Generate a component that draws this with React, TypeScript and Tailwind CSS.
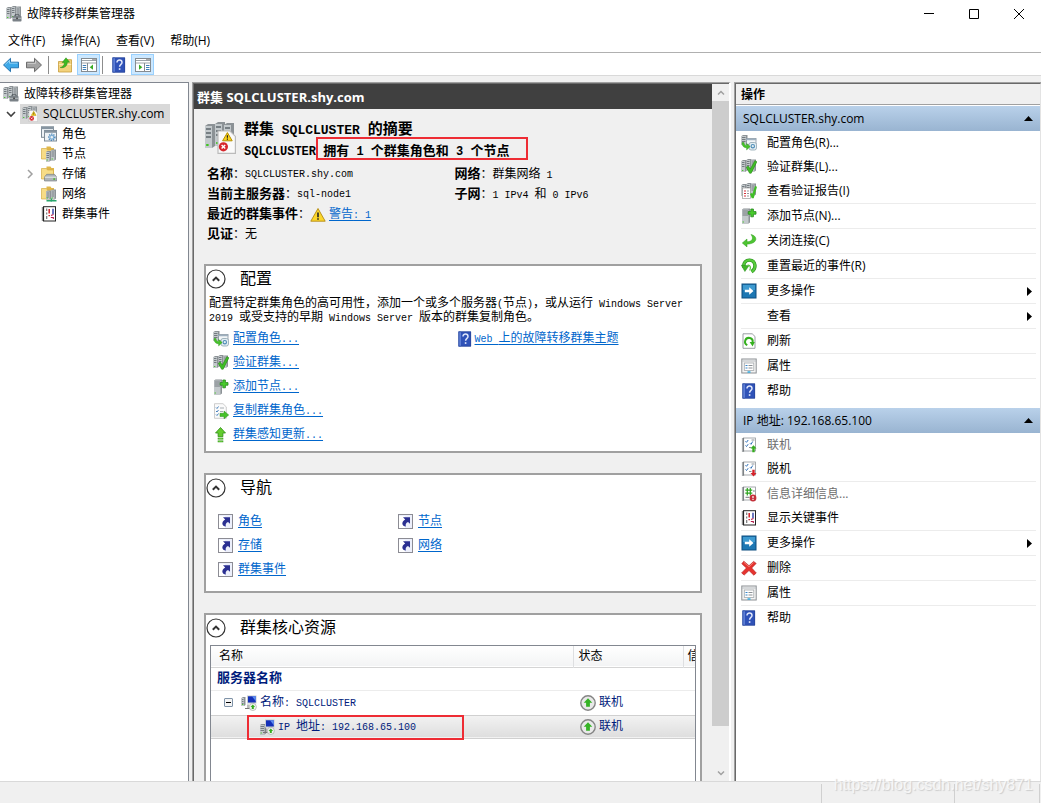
import React from 'react';

interface IconProps {
  className?: string;
}

interface ActionItem {
  label: string;
  icon?: React.ReactNode;
  divider?: boolean;
  disabled?: boolean;
  submenu?: boolean;
}

/* ---------- Icon parts ---------- */

const Svg: React.FC<{ className?: string; box?: string; children: React.ReactNode }> = ({
  className = 'w-4 h-4',
  box = '0 0 16 16',
  children,
}) => (
  <svg viewBox={box} className={`${className} shrink-0`} fill="none" aria-hidden="true">
    {children}
  </svg>
);

const Rack: React.FC<{ x: number; y: number; w?: number; h?: number }> = ({ x, y, w = 5, h = 11 }) => (
  <g>
    <path d={`M${x} ${y + 1}l1.5 -1h${w - 1.5}v${h - 1}l-1.5 1h${1.5 - w}z`} fill="#8c9296" />
    <rect x={x} y={y + 1} width={w - 1.5} height={h - 1} fill="#c3c9cc" />
    <path
      d={`M${x + 0.5} ${y + 2.5}h${w - 2.5}M${x + 0.5} ${y + 4.5}h${w - 2.5}M${x + 0.5} ${y + 6.5}h${w - 2.5}`}
      stroke="#5f676c"
      strokeWidth="0.8"
    />
    <rect x={x + 0.6} y={y + h - 2} width="1.2" height="1" fill="#3fc51f" />
  </g>
);

const Racks = () => (
  <g>
    <Rack x={5.5} y={0} h={12} />
    <Rack x={10} y={0.5} h={12} />
    <Rack x={0.5} y={1} h={12} />
  </g>
);

const ManagerIcon = () => (
  <Svg>
    <Racks />
    <rect x="6.5" y="10" width="9" height="5.5" rx="0.8" fill="#7a8187" />
    <path d="M9 10V8.8h4V10" stroke="#4b5257" />
    <path d="M6.5 12.3h9" stroke="#c9ced1" strokeWidth="0.8" />
    <rect x="10.3" y="11.6" width="1.5" height="1.5" fill="#333" />
  </Svg>
);

const ClusterIcon: React.FC<IconProps> = ({ className }) => (
  <Svg className={className}>
    <Racks />
    <path d="M7 4.5h6l2.7 2.7v8.5H7z" fill="#fafafa" stroke="#bbb" strokeWidth="0.6" />
    <path d="M11.7 5.3l2.4 4.1H9.3z" fill="#f9d21c" stroke="#b58f00" strokeWidth="0.5" />
    <path d="M11.7 6.6v1.3M11.7 8.3v0.6" stroke="#222" strokeWidth="0.6" />
    <circle cx="9.7" cy="12.4" r="2.3" fill="#d6262c" />
    <path d="M8.8 11.5l1.8 1.8M10.6 11.5l-1.8 1.8" stroke="#fff" strokeWidth="0.7" />
  </Svg>
);

const RolesIcon = () => (
  <Svg>
    <rect x="0.5" y="0.8" width="12" height="10.5" fill="#eef2f5" stroke="#7f8c97" />
    <path d="M0 2h13" stroke="#8795a1" strokeWidth="2.2" />
    <rect x="3.5" y="4.5" width="12" height="10.5" fill="#eef2f5" stroke="#7f8c97" />
    <path d="M3 5.7h13" stroke="#8795a1" strokeWidth="2.2" />
    <circle cx="10.8" cy="11.2" r="3" stroke="#4b86b8" strokeWidth="1.6" strokeDasharray="1.2 1" />
    <circle cx="10.8" cy="11.2" r="1.9" stroke="#7fb0d6" strokeWidth="1.2" />
  </Svg>
);

const FolderShape = () => (
  <g>
    <path d="M5.5 0.5h4l1 1.5H13V12H5.5z" fill="#e0b64a" />
    <path d="M0.5 2.5h5l1 1.5h6V13H0.5z" fill="#f7dc86" stroke="#d4ac45" strokeWidth="0.7" />
  </g>
);

const NodesIcon = () => (
  <Svg>
    <FolderShape />
    <Rack x={5} y={5} w={5} h={10.5} />
    <Rack x={10} y={3.5} w={5} h={11} />
  </Svg>
);

const StorageIcon = () => (
  <Svg>
    <FolderShape />
    <path d="M3.5 11l2.2-2.7h7.8l2.2 2.7v4H3.5z" fill="#aeb4b8" stroke="#6c7378" strokeWidth="0.6" />
    <path d="M3.8 11.2h11.7" stroke="#e9ecee" />
    <rect x="12.3" y="12.4" width="1.8" height="1.3" fill="#35b51a" />
  </Svg>
);

const NetworkIcon = () => (
  <Svg>
    <FolderShape />
    <Rack x={5} y={4.5} w={5} h={9} />
    <Rack x={10} y={3.5} w={5} h={10} />
    <path d="M5.5 14.7h10M10.3 12.5v3.2" stroke="#27a56c" strokeWidth="1.4" />
  </Svg>
);

const EventsIcon = () => (
  <Svg>
    <rect x="2.5" y="0.7" width="12" height="14.3" fill="#fff" stroke="#222" />
    <path d="M2 1.5v13.5" stroke="#222" strokeWidth="2.4" strokeDasharray="1 1" />
    <path d="M5.7 2.5v2.5M5.7 6.5v2M5.7 10v3" stroke="#777" strokeWidth="1.2" />
    <path d="M8.2 3v4.5M8.2 9v1.3" stroke="#cf1f26" strokeWidth="1.5" />
    <path d="M12 2.8v5.5" stroke="#1c2f9e" strokeWidth="1.3" />
    <path d="M10 9.5l2.5-1M9.8 11.5h2.5v1.5" stroke="#b31b4b" strokeWidth="1.1" />
  </Svg>
);

const HelpIcon = () => (
  <Svg>
    <rect x="1.5" y="0.5" width="12.5" height="15" fill="#2f52b8" />
    <rect x="1.5" y="0.5" width="2.5" height="15" fill="#5c7ed6" />
    <path d="M1.8 0.8h11.9v14.4H1.8z" stroke="#27418f" strokeWidth="0.6" />
    <path d="M6 5.4c0-3.2 5-3.1 5 0 0 2-2.4 2-2.4 4.4" stroke="#dfe6fa" strokeWidth="1.5" />
    <rect x="7.8" y="11.2" width="1.6" height="1.7" fill="#dfe6fa" />
  </Svg>
);

const BackArrow = () => (
  <Svg>
    <path d="M0.5 8L7.5 1.3v3.9h8v5.6h-8v3.9z" fill="#3ea9e8" stroke="#1c6ba8" strokeWidth="0.9" strokeLinejoin="round" />
    <path d="M2.3 7.4L6.5 3.5v2.7h8" stroke="#a5dcf9" strokeWidth="0.8" />
  </Svg>
);

const ForwardArrow = () => (
  <Svg>
    <path d="M15.5 8L8.5 1.3v3.9h-8v5.6h8v3.9z" fill="#a3a3a3" stroke="#606060" strokeWidth="0.9" strokeLinejoin="round" />
    <path d="M1.5 6.4h8V3.6" stroke="#d4d4d4" strokeWidth="0.8" />
  </Svg>
);

const UpFolderIcon = () => (
  <Svg>
    <path d="M1.5 4.5H8l1.5-1.8h5V15h-13z" fill="#f3d27c" stroke="#c79c3a" strokeWidth="0.8" />
    <path d="M1.9 7.5h12.3" stroke="#fbe9b5" />
    <path d="M3.2 10.5c2.5-0.5 4.2-2.2 4.2-5H5.2L9 0.8l3.6 4.4h-2.3c0 3.8-3 6.2-7.1 5.3z" fill="#3dbb22" stroke="#27861a" strokeWidth="0.5" />
  </Svg>
);

const PaneIcon: React.FC<{ mirrored?: boolean }> = ({ mirrored }) => (
  <Svg>
    <rect x="0.5" y="1.5" width="15" height="13" fill="#fff" stroke="#858c92" />
    <path d="M1 3.5h14M1 6h14" stroke="#9da4aa" />
    <path d="M11.5 2.6h1M13.5 2.6h1" stroke="#444" />
    {mirrored ? (
      <g>
        <path d="M9.5 6v8.5" stroke="#858c92" />
        <path d="M11 8.5h3.5M11 10.5h3.5M11 12.5h3.5" stroke="#3d7fb8" />
        <path d="M4 7.6v5.2L7.3 10.2z" fill="#39ad25" />
      </g>
    ) : (
      <g>
        <path d="M6.5 6v8.5" stroke="#858c92" />
        <path d="M1.7 8.5h3.5M1.7 10.5h3.5M1.7 12.5h3.5" stroke="#3d7fb8" />
        <path d="M12 7.6v5.2L8.7 10.2z" fill="#39ad25" />
      </g>
    )}
  </Svg>
);

const ConfigRoleIcon = () => (
  <Svg>
    <Rack x={0.5} y={0} w={6} h={10} />
    <rect x="5.5" y="3.5" width="9.5" height="6" fill="#f3f6f8" stroke="#8795a1" strokeWidth="0.8" />
    <path d="M5.2 4.5h10" stroke="#9fb0bf" strokeWidth="1.5" />
    <rect x="8" y="7.5" width="7.5" height="7.5" rx="2" fill="#e2edf2" stroke="#8ea4b0" strokeWidth="0.8" />
    <circle cx="11.8" cy="11.2" r="1.7" stroke="#4f8db8" strokeWidth="1.1" />
    <path d="M1 7.5c0 3.8 2 5.2 4.6 5.2v2.2L9.2 11.6 5.6 8.4v2C3.8 10.4 3.2 9.4 3 7.5z" fill="#46c22a" stroke="#2b8f18" strokeWidth="0.4" />
  </Svg>
);

const ValidateIcon = () => (
  <Svg>
    <Racks />
    <path d="M5.3 8.3l2-1.2 2 3 4.6-8.4 2 1-5.7 11.5H8.6z" fill="#3fbe26" stroke="#2a8a18" strokeWidth="0.6" />
  </Svg>
);

const ReportIcon = () => (
  <Svg>
    <Racks />
    <rect x="1.5" y="5" width="8" height="10.5" fill="#fff" stroke="#9a9a9a" strokeWidth="0.7" />
    <path d="M3 8h2M3 10.5h2M3 13h2" stroke="#d4303a" strokeWidth="1.2" />
    <path d="M6 8h2M6 10.5h2M6 13h2" stroke="#8a8f94" strokeWidth="0.9" />
    <path d="M9 11l1.5-1 0.8 1.2L14 3l2 0.7-3.3 11.5h-2z" fill="#3fbe26" />
  </Svg>
);

const AddNodeIcon = () => (
  <Svg>
    <Rack x={1} y={0.5} w={8} h={15} />
    <path d="M9.8 1h2.6v2.6H15v2.6h-2.6v2.6H9.8V6.2H7.2V3.6h2.6z" fill="#49cb2c" stroke="#22851a" strokeWidth="0.8" />
  </Svg>
);

const CopyRoleIcon = () => (
  <Svg>
    <path d="M1.5 0.7h8.5l3.3 3.2v11.4H1.5z" fill="#fbfbfb" stroke="#c0c0c0" strokeWidth="0.8" />
    <path d="M3 4.5l1 1 1.5-2M3 8l1 1 1.5-2M3 11.5l1 1 1.5-2" stroke="#3273b3" strokeWidth="0.9" />
    <path d="M7 5h4M7 8.5h3" stroke="#a6adb2" />
    <path d="M7 10.3h4V8l4.7 4-4.7 3.8v-2.3H7z" fill="#46c22a" stroke="#2b8f18" strokeWidth="0.5" />
  </Svg>
);

const UpdateIcon = () => (
  <Svg>
    <path d="M7.5 0.5l5 5.5H9.9v3.7H5.1V6H2.5z" fill="#62cc2d" stroke="#2f8d18" strokeWidth="0.8" />
    <path d="M4.7 11.6h5.6M4.7 14.4h5.6" stroke="#3a9d1e" strokeWidth="1.8" />
    <path d="M5.5 11.6h4M5.5 14.4h4" stroke="#7bdc48" strokeWidth="0.7" />
  </Svg>
);

const CloseConnIcon = () => (
  <Svg>
    <path d="M10 1.5c7 1.4 7 9.4-4 9.6v2.8L1.3 10 6 6v2.8c5.2 0 7-3.6 4-7.3z" fill="#4dc431" stroke="#2f9c1c" strokeWidth="0.5" />
  </Svg>
);

const ResetIcon = () => (
  <Svg>
    <path d="M3 9.5C2 4.5 5.2 2 8.6 2.1c6.4 0.3 7 8.6 2 11.7" stroke="#278b1c" strokeWidth="3.4" />
    <path d="M3 9.5C2 4.5 5.2 2 8.6 2.1c6.4 0.3 7 8.6 2 11.7" stroke="#58cb3c" strokeWidth="2.2" />
    <path d="M0.3 7.2l7.6 0.5-4 5.8z" fill="#41b628" stroke="#278b1c" strokeWidth="0.5" />
    <path d="M6.5 7.3c2.5-0.6 4 2.2 2.2 5.2" stroke="#58cb3c" strokeWidth="1.3" />
  </Svg>
);

const MoreIcon = () => (
  <Svg>
    <rect x="1" y="1" width="14" height="14" fill="#1d77b3" stroke="#0f4f80" />
    <path d="M2 2h12v5H2z" fill="#3d9ad0" />
    <path d="M3.8 6.8h4.4V4.2L12.5 8l-4.3 3.8V9.2H3.8z" fill="#fff" />
  </Svg>
);

const RefreshIcon = () => (
  <Svg>
    <path d="M2 0.8h9.2L14 3.5v11.8H2z" fill="#fff" stroke="#8e9499" strokeWidth="0.9" />
    <path d="M6.3 12.2A3.8 3.8 0 1 1 11.6 9.5" stroke="#35b01f" strokeWidth="2" />
    <path d="M8.6 9h5.2l-2.2 4.4z" fill="#35b01f" />
  </Svg>
);

const PropsIcon = () => (
  <Svg>
    <rect x="0.8" y="1" width="14.4" height="14" fill="#f4f4f4" stroke="#8b8f93" />
    <path d="M1 3h14" stroke="#b7bcc0" />
    <rect x="3.3" y="5" width="9.5" height="7.5" fill="#fff" stroke="#a3a8ac" strokeWidth="0.8" />
    <path d="M4.5 7.5h2M4.5 10h2" stroke="#3584c9" />
    <path d="M7.5 7.5h4M7.5 10h4" stroke="#8b9094" />
    <path d="M6.5 14h3" stroke="#29a8e0" strokeWidth="1.4" />
  </Svg>
);

const TaskDoc: React.FC<{ children: React.ReactNode }> = ({ children }) => (
  <Svg>
    <rect x="2.5" y="1" width="12" height="13" fill="#fff" stroke="#8f959a" strokeWidth="0.8" />
    <path d="M2 1.5v13" stroke="#565c61" strokeWidth="2.2" strokeDasharray="1 1" />
    {children}
  </Svg>
);

const OnlineIcon = () => (
  <TaskDoc>
    <path d="M4.5 4.3l1 1L7.2 3M4.5 8.5l1 1 1.7-2.3M9 6.3l1 1 1.7-2.8" stroke="#2e6fb8" />
    <path d="M8 10.5h2.5M10.5 3h3" stroke="#8b9196" />
    <path d="M12.5 8.3l3 3.3h-1.8v3.6h-2.4v-3.6H9.5z" fill="#35ad1f" />
  </TaskDoc>
);

const OfflineIcon = () => (
  <TaskDoc>
    <path d="M4.5 4.3l1 1L7.2 3M4.5 8.5l1 1 1.7-2.3M9 6.3l1 1 1.7-2.8" stroke="#2e6fb8" />
    <path d="M8 10.5h2.5M10.5 3h3" stroke="#8b9196" />
    <path d="M12.5 15.4l3-3.3h-1.8V8.7h-2.4v3.4H9.5z" fill="#d4222a" />
  </TaskDoc>
);

const InfoIcon = () => (
  <TaskDoc>
    <path d="M6.3 2v7.5M9.3 2v7.5M4.3 4.2h7M4.3 7.2h7" stroke="#2da31e" strokeWidth="1.2" />
    <path d="M4.5 11.3h4M12 5h1.8" stroke="#70767b" />
    <circle cx="12" cy="12" r="3.4" fill="#c5303a" />
    <path d="M12 10v2.3M12 13v1" stroke="#fff" strokeWidth="1.2" />
  </TaskDoc>
);

const DeleteIcon = () => (
  <Svg>
    <path
      d="M2.8 1.2L8 5.7l4.6-4.3 2.6 2L10.7 8l4.6 5-2.5 2.2L8 10.5l-4.8 4.6-2.6-2.2L5.4 8 0.8 3.7z"
      fill="#e6332f"
      stroke="#b01c1c"
      strokeWidth="0.6"
    />
    <path d="M2.8 2.2L8 6.8l4.5-4.2" stroke="#f78b80" strokeWidth="0.8" />
  </Svg>
);

const ShortcutIcon = () => (
  <Svg>
    <rect x="0.5" y="0.5" width="14" height="14" fill="#eceffb" stroke="#8c8c94" />
    <path d="M1 2h6v12H1z" fill="#fff" />
    <path d="M5 3.2h7v6.6L10 7.9c-2.2 1-2.9 2.6-2 4.6C3.6 12.3 3 8 7.2 5.5z" fill="#2a2f91" />
  </Svg>
);

const WarningIcon = () => (
  <Svg>
    <path d="M8 1.5l7.2 12.7H0.8z" fill="#fbd62a" stroke="#b38a13" strokeWidth="0.9" strokeLinejoin="round" />
    <path d="M8 5.5v4.7M8 11.3v1.5" stroke="#222" strokeWidth="1.6" />
  </Svg>
);

const ComputerIcon: React.FC<{ tall?: boolean }> = ({ tall }) => (
  <Svg>
    {tall ? <Rack x={1} y={5} w={6} h={10.5} /> : <Rack x={0.5} y={2} w={4} h={9} />}
    <rect x="6" y="0.5" width="9.5" height="8" fill="#c8ccd0" />
    <rect x="7" y="1.3" width="7.8" height="6.2" fill="#1430b8" />
    <path d="M11 1.3h3.8v5z" fill="#5e8ef0" />
    <path d="M4 13.5h5M7 9.5v4" stroke="#777" />
    <circle cx="11.8" cy="11.9" r="3.6" fill="#f0f2f0" stroke="#a5aaa5" strokeWidth="0.7" />
    <path d="M11.8 9.4l2.3 2.5h-1.3v2.2h-2v-2.2H9.5z" fill="#35ad1f" />
  </Svg>
);

const StatusUpIcon = () => (
  <Svg>
    <circle cx="8" cy="8" r="7.2" fill="#e9e9e9" stroke="#858585" strokeWidth="1.4" />
    <path d="M8 3.3l4.3 4.5H9.9v3.9H6.1V7.8H3.7z" fill="#35b325" />
  </Svg>
);

const CollapseIcon = () => (
  <Svg className="w-[20px] h-[20px]" box="0 0 20 20">
    <circle cx="10" cy="10" r="9" fill="#fff" stroke="#333" strokeWidth="1.2" />
    <path d="M6.8 11.8L10 8.6l3.2 3.2" stroke="#333" strokeWidth="2" />
  </Svg>
);

/* ---------- Text ---------- */

// Latin runs are half the width of a CJK glyph, so they get their own size
const Mixed: React.FC<{ text: string; latin?: string }> = ({ text, latin = 'text-[10px]' }) => (
  <>
    {text.split(/([\x20-\x7e]+)/).map((part, i) =>
      i % 2 ? (
        <span key={i} className={`${latin} leading-none`}>
          {part}
        </span>
      ) : (
        part
      )
    )}
  </>
);

const TextLink: React.FC<{ text: string; icon: React.ReactNode; gap?: string }> = ({ text, icon, gap = 'gap-1' }) => (
  <a href="#" className={`flex items-center h-6 ${gap} text-[#0066cc]`}>
    {icon}
    <span className="underline underline-offset-2 whitespace-nowrap">
      <Mixed text={text} />
    </span>
  </a>
);

/* ---------- Data ---------- */

const MENUS = ['文件(F)', '操作(A)', '查看(V)', '帮助(H)'];

const TREE_CHILDREN = [
  { label: '角色', icon: <RolesIcon /> },
  { label: '节点', icon: <NodesIcon /> },
  { label: '存储', icon: <StorageIcon />, expandable: true },
  { label: '网络', icon: <NetworkIcon /> },
  { label: '群集事件', icon: <EventsIcon /> },
];

const CONFIG_LINKS = [
  { label: '配置角色...', icon: <ConfigRoleIcon /> },
  { label: '验证群集...', icon: <ValidateIcon /> },
  { label: '添加节点...', icon: <AddNodeIcon /> },
  { label: '复制群集角色...', icon: <CopyRoleIcon /> },
  { label: '群集感知更新...', icon: <UpdateIcon /> },
];

const NAV_LINKS = ['角色', '节点', '存储', '网络', '群集事件'];

const CLUSTER_ACTIONS: ActionItem[] = [
  { label: '配置角色(R)...', icon: <ConfigRoleIcon /> },
  { label: '验证群集(L)...', icon: <ValidateIcon /> },
  { label: '查看验证报告(I)', icon: <ReportIcon />, divider: true },
  { label: '添加节点(N)...', icon: <AddNodeIcon />, divider: true },
  { label: '关闭连接(C)', icon: <CloseConnIcon />, divider: true },
  { label: '重置最近的事件(R)', icon: <ResetIcon />, divider: true },
  { label: '更多操作', icon: <MoreIcon />, divider: true, submenu: true },
  { label: '查看', divider: true, submenu: true },
  { label: '刷新', icon: <RefreshIcon />, divider: true },
  { label: '属性', icon: <PropsIcon />, divider: true },
  { label: '帮助', icon: <HelpIcon /> },
];

const ADDRESS_ACTIONS: ActionItem[] = [
  { label: '联机', icon: <OnlineIcon />, disabled: true },
  { label: '脱机', icon: <OfflineIcon />, divider: true },
  { label: '信息详细信息...', icon: <InfoIcon />, disabled: true },
  { label: '显示关键事件', icon: <EventsIcon />, divider: true },
  { label: '更多操作', icon: <MoreIcon />, divider: true, submenu: true },
  { label: '删除', icon: <DeleteIcon />, divider: true },
  { label: '属性', icon: <PropsIcon />, divider: true },
  { label: '帮助', icon: <HelpIcon /> },
];

/* ---------- Sections ---------- */

const TitleBar = () => (
  <header className="flex items-center h-7 pl-[6px] bg-white">
    <ManagerIcon />
    <h1 className="ml-[5px] flex-1">故障转移群集管理器</h1>
    <button aria-label="最小化" className="w-[45px] h-7 flex items-center justify-center">
      <Svg className="w-[10px] h-[10px]" box="0 0 10 10"><path d="M0 4.5h10" stroke="#000" /></Svg>
    </button>
    <button aria-label="最大化" className="w-[45px] h-7 flex items-center justify-center">
      <Svg className="w-[10px] h-[10px]" box="0 0 10 10"><path d="M0.5 0.5h9v9h-9z" stroke="#000" /></Svg>
    </button>
    <button aria-label="关闭" className="w-[45px] h-7 flex items-center justify-center">
      <Svg className="w-[10px] h-[10px]" box="0 0 10 10"><path d="M0 0l10 10M10 0L0 10" stroke="#000" /></Svg>
    </button>
  </header>
);

const Toolbar = () => (
  <div className="flex items-center h-[23px] pt-px pl-[3px] bg-white border-b border-[#d9d9d9]">
    <button aria-label="后退"><BackArrow /></button>
    <button aria-label="前进" className="ml-[7px]"><ForwardArrow /></button>
    <span className="w-px h-[18px] ml-[6px] bg-[#8d8d8d]" />
    <button aria-label="向上" className="ml-2"><UpFolderIcon /></button>
    <button aria-label="显示树" className="ml-1 w-[23px] h-[21px] flex items-center justify-center bg-[#cce8ff] border border-[#99d1ff]">
      <PaneIcon />
    </button>
    <span className="w-px h-[18px] ml-[2px] bg-[#8d8d8d]" />
    <button aria-label="帮助" className="ml-2"><HelpIcon /></button>
    <button aria-label="显示操作" className="ml-[4px] w-[23px] h-[21px] flex items-center justify-center bg-[#cce8ff] border border-[#99d1ff]">
      <PaneIcon mirrored />
    </button>
  </div>
);

const Tree = () => (
  <nav className="w-[189px] shrink-0 bg-white border-t border-r border-[#828790] pt-px">
    <div className="flex items-center h-5 pl-[3px] gap-[5px]">
      <ManagerIcon />
      故障转移群集管理器
    </div>
    <div className="flex items-center h-5 pl-[6px]">
      <Svg className="w-[10px] h-[10px]" box="0 0 10 10"><path d="M1 3l4 4 4-4" stroke="#404040" strokeWidth="1.6" /></Svg>
      <span className="flex items-center h-5 ml-1 pl-[2px] pr-[6px] gap-[5px] bg-[#d9d9d9]">
        <ClusterIcon />
        <span>SQLCLUSTER.shy.com</span>
      </span>
    </div>
    {TREE_CHILDREN.map((item) => (
      <div key={item.label} className="flex items-center h-5 pl-[25px]">
        <span className="w-4">
          {item.expandable && (
            <Svg className="w-[10px] h-[10px]" box="0 0 10 10"><path d="M3 1l4 4-4 4" stroke="#a0a0a0" strokeWidth="1.5" /></Svg>
          )}
        </span>
        {item.icon}
        <span className="ml-[5px]">{item.label}</span>
      </div>
    ))}
  </nav>
);

const Card: React.FC<{ title: string; className?: string; children: React.ReactNode }> = ({ title, className = '', children }) => (
  <section className={`mt-5 bg-white border-2 border-[#a0a0a0] ${className}`}>
    <div className="flex items-center h-[26px]">
      <button aria-label="折叠"><CollapseIcon /></button>
      <h3 className="ml-[14px] pt-[2px] text-[16px]">{title}</h3>
    </div>
    {children}
  </section>
);

const Field: React.FC<{ label: string; children: React.ReactNode }> = ({ label, children }) => (
  <div className="flex items-center h-5 pt-[2px]">
    <dt className="text-[13px] font-bold">
      {label}
      <span className="text-[12px] font-normal">：</span>
    </dt>
    <dd className="flex items-center">{children}</dd>
  </div>
);

const Summary = () => (
  <section className="pt-3">
    <div className="relative flex gap-2">
      <span className="pt-px"><ClusterIcon className="w-8 h-8" /></span>
      <div className="font-bold whitespace-nowrap">
        <h2 className="text-[15px] leading-5"><Mixed text="群集 SQLCLUSTER 的摘要" latin="text-[13px]" /></h2>
        <p className="text-[13px] leading-[21px]"><Mixed text="SQLCLUSTER 拥有 1 个群集角色和 3 个节点" latin="text-[12px]" /></p>
      </div>
      <span className="absolute left-[112px] top-[16px] w-[212px] h-[23px] border-2 border-[#ee2c34]" />
    </div>
    <dl className="grid grid-cols-2 mt-[2px] pl-[3px]">
      <Field label="名称"><Mixed text="SQLCLUSTER.shy.com" /></Field>
      <Field label="网络"><span><Mixed text="群集网络 1" /></span></Field>
      <Field label="当前主服务器"><Mixed text="sql-node1" /></Field>
      <Field label="子网"><span><Mixed text="1 IPv4 和 0 IPv6" /></span></Field>
      <div className="col-span-2">
        <Field label="最近的群集事件">
          <WarningIcon />
          <a href="#" className="ml-[3px] text-[#0066cc] underline underline-offset-2"><Mixed text="警告: 1" /></a>
        </Field>
        <Field label="见证">无</Field>
      </div>
    </dl>
  </section>
);

const StatusCell = () => (
  <td colSpan={2} className="pl-[7px]">
    <span className="flex items-center gap-[3px]"><StatusUpIcon />联机</span>
  </td>
);

const ResourceTable = () => (
  <div className="relative flex-1 mt-1 mx-1 border border-b-0 border-[#828790] overflow-hidden">
    <table className="w-full table-fixed text-[#001b7b]">
      <colgroup>
        <col />
        <col className="w-[110px]" />
        <col className="w-[12px]" />
      </colgroup>
      <thead>
        <tr className="h-[21px] text-left text-black bg-linear-to-b from-white to-[#f3f4f5] border-b border-[#d5d5d5]">
          <th className="font-normal pt-[2px] pl-2">名称</th>
          <th className="font-normal pt-[2px] pl-[5px] border-l border-[#dedfe1]">状态</th>
          <th className="font-normal pt-[2px] pl-1 border-l border-[#dedfe1] overflow-hidden whitespace-nowrap">信</th>
        </tr>
      </thead>
      <tbody>
        <tr className="h-[23px] border-b border-[#ececec]">
          <td colSpan={3} className="pl-[6px] text-[13px] font-bold">服务器名称</td>
        </tr>
        <tr className="h-[25px]">
          <td className="pl-[13px]">
            <span className="flex items-center">
              <button aria-label="折叠" className="w-[9px] h-[9px] flex items-center justify-center bg-[#f4f4f4] border border-[#7f93a8] rounded-[1px]">
                <span className="w-[5px] h-px bg-black" />
              </button>
              <span className="ml-2 mr-[3px]"><ComputerIcon /></span>
              <span><Mixed text="名称: SQLCLUSTER" /></span>
            </span>
          </td>
          <StatusCell />
        </tr>
        <tr className="h-[23px] bg-linear-to-b from-[#f2f2f2] to-[#dedede] border-y border-[#d0d0d0]">
          <td className="pl-12">
            <span className="flex items-center gap-[3px]">
              <ComputerIcon tall />
              <span><Mixed text="IP 地址: 192.168.65.100" /></span>
            </span>
          </td>
          <StatusCell />
        </tr>
      </tbody>
    </table>
    <span className="absolute left-[36px] top-[69px] w-[217px] h-[25px] border-2 border-[#ee2c34]" />
  </div>
);

const Scrollbar = () => (
  <div className="w-[17px] flex flex-col bg-[#f0f0f0]">
    <button aria-label="向上滚动" className="h-[17px] flex items-center justify-center">
      <Svg className="w-[8px] h-[8px]" box="0 0 8 8"><path d="M1 5.5l3-3 3 3" stroke="#a0a0a0" strokeWidth="1.5" /></Svg>
    </button>
    <div className="flex-1 pb-[38px]"><div className="h-full bg-[#cdcdcd]" /></div>
    <button aria-label="向下滚动" className="h-[17px] flex items-center justify-center">
      <Svg className="w-[8px] h-[8px]" box="0 0 8 8"><path d="M1 2.5l3 3 3-3" stroke="#a0a0a0" strokeWidth="1.5" /></Svg>
    </button>
  </div>
);

const ClusterView = () => (
  <main className="flex-1 min-w-0 flex ml-[3px] border-l border-t border-l-[#a0a0a0] border-t-[#a0a0a0] border-r-2 border-r-white">
    <div className="flex-1 min-w-0 flex border-l border-t border-[#696969]">
      <div className="flex-1 min-w-0 flex flex-col overflow-hidden">
        <h2 className="h-[25px] shrink-0 pl-[3px] bg-[#404040] text-white text-[13px] leading-[26px] font-bold">群集 SQLCLUSTER.shy.com</h2>
        <div className="flex-1 flex flex-col px-[10px] font-[Liberation_Mono,Noto_Sans_CJK_SC,monospace]">
          <Summary />
          <Card title="配置" className="pb-1">
            <p className="mt-[5px] pl-[3px] leading-[14px]">
              <Mixed text="配置特定群集角色的高可用性，添加一个或多个服务器(节点)，或从运行 Windows Server 2019 或受支持的早期 Windows Server 版本的群集复制角色。" />
            </p>
            <div className="grid grid-cols-2 mt-[2px] pl-[7px]">
              <div>
                {CONFIG_LINKS.map((link) => (
                  <TextLink key={link.label} text={link.label} icon={link.icon} />
                ))}
              </div>
              <TextLink text="Web 上的故障转移群集主题" icon={<HelpIcon />} gap="gap-[2px]" />
            </div>
          </Card>
          <Card title="导航" className="pb-[9px]">
            <div className="grid grid-cols-[180px_1fr] mt-[9px] pl-3">
              {NAV_LINKS.map((label) => (
                <TextLink key={label} text={label} icon={<ShortcutIcon />} />
              ))}
            </div>
          </Card>
          <Card title="群集核心资源" className="flex-1 flex flex-col border-b-0">
            <ResourceTable />
          </Card>
        </div>
      </div>
      <Scrollbar />
    </div>
  </main>
);

const ActionGroup: React.FC<{ title: string; items: ActionItem[] }> = ({ title, items }) => (
  <section className="mb-[5px]">
    <button className="w-full h-[25px] flex items-center justify-between px-[7px] bg-linear-to-b from-[#b9d1ea] to-[#99b4d1]">
      {title}
      <Svg className="w-[9px] h-[5px]" box="0 0 9 5"><path d="M0 5L4.5 0 9 5z" fill="#000" /></Svg>
    </button>
    <ul className="pl-[5px] pr-1">
      {items.map((item) => (
        <li key={item.label} className={item.divider ? 'border-b border-[#ececec]' : ''}>
          <button disabled={item.disabled} className="w-full h-6 flex items-center pr-1 disabled:text-[#6d6d6d]">
            <span className="w-[26px]">{item.icon}</span>
            <span className="flex-1 text-left">{item.label}</span>
            {item.submenu && (
              <Svg className="w-[5px] h-[9px]" box="0 0 5 9"><path d="M0 0l5 4.5L0 9z" fill="#000" /></Svg>
            )}
          </button>
        </li>
      ))}
    </ul>
  </section>
);

const ActionsPane = () => (
  <aside className="w-[307px] shrink-0 ml-[3px] border-l border-t border-[#a0a0a0]">
    <div className="h-full bg-white border-l border-t border-[#696969] border-r border-r-[#e3e3e3]">
      <h2 className="h-[21px] mb-px pl-[5px] leading-[22px] font-bold bg-[#f0f0f0] border-b border-[#a0a0a0]">操作</h2>
      <ActionGroup title="SQLCLUSTER.shy.com" items={CLUSTER_ACTIONS} />
      <ActionGroup title="IP 地址: 192.168.65.100" items={ADDRESS_ACTIONS} />
    </div>
  </aside>
);

const App: React.FC = () => (
  <div className="relative h-screen flex flex-col overflow-hidden bg-[#f0f0f0] text-black text-[12px] font-[Open_Sans,Noto_Sans_CJK_SC,sans-serif]">
    <TitleBar />
    <div className="flex items-center h-[25px] pt-[2px] pl-2 gap-4 bg-white border-b border-[#b0b0b0]">
      {MENUS.map((menu) => (
        <button key={menu}>{menu}</button>
      ))}
    </div>
    <Toolbar />
    <div className="flex-1 min-h-0 flex pt-[6px]">
      <Tree />
      <ClusterView />
      <ActionsPane />
    </div>
    <footer className="flex h-[22px] shrink-0 justify-end pt-[2px] pr-px border-t border-[#d9d9d9]">
      <span className="w-[133px] border-l border-[#d0d0d0]" />
      <span className="w-[86px] border-x border-[#d0d0d0]" />
    </footer>
    <span className="absolute right-2 bottom-2 text-[16px] leading-5 text-white/70 [text-shadow:1px_1px_1px_#cccccc] font-[Liberation_Sans,sans-serif]">
      https://blog.csdn.net/shy871
    </span>
  </div>
);

export default App;
